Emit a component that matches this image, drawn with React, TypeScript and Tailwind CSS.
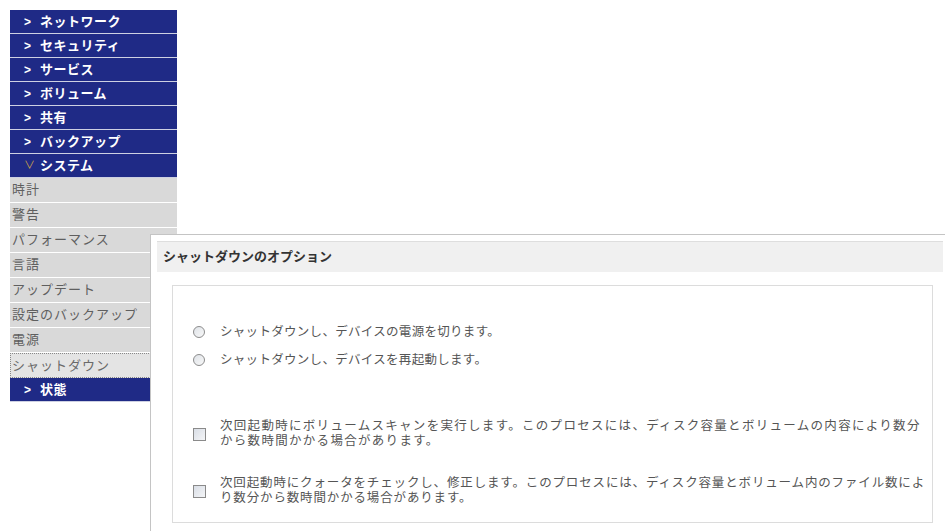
const menuTop = ["ネットワーク", "セキュリティ", "サービス", "ボリューム", "共有", "バックアップ"];
const systemItems = ["時計", "警告", "パフォーマンス", "言語", "アップデート", "設定のバックアップ", "電源"];

const jp = { fontFamily: '"Liberation Sans", "Noto Sans CJK JP", sans-serif' };

function BlueRow({ label, open }: { label: string; open?: boolean }) {
  return (
    <div className="h-[24px] bg-[#1f2a86] border-b border-[#cdd0e2] flex items-center pl-[14px] text-white text-[13px] font-bold tracking-[0.5px]">
      {open ? (
        <span className="w-[16px] text-[#c9a24a] text-[11px] font-normal">∨</span>
      ) : (
        <span className="w-[16px] text-[12px]">&gt;</span>
      )}
      <span>{label}</span>
    </div>
  );
}

function Radio() {
  return (
    <span className="w-[12px] h-[12px] rounded-full border border-[#8c8c8c] bg-gradient-to-br from-[#dfe3e8] to-[#f8f8f8] shrink-0" />
  );
}

function Checkbox() {
  return (
    <span className="w-[13px] h-[13px] border border-[#8a8a8a] bg-gradient-to-br from-[#d9dee6] to-[#f4f5f7] shrink-0" />
  );
}

export default function App() {
  return (
    <div className="relative w-[945px] h-[531px] bg-white overflow-hidden" style={jp}>
      <div className="pt-[10px] pl-[10px] w-[177px]">
        {menuTop.map((m) => (
          <BlueRow key={m} label={m} />
        ))}
        <BlueRow label="システム" open />
        {systemItems.map((s) => (
          <div
            key={s}
            className="h-[25px] bg-[#d9d9d9] border-b border-white flex items-center pl-[2px] text-[13px] text-[#5f5f5f] tracking-[1px]"
          >
            {s}
          </div>
        ))}
        <div className="h-[25px] bg-[#e4e4e4] border border-dotted border-[#888] flex items-center pl-[1px] text-[13px] text-[#6a6a6a] tracking-[1px]">
          シャットダウン
        </div>
        <BlueRow label="状態" />
      </div>

      <div className="absolute left-[150px] top-[234px] w-[800px] h-[320px] bg-white border-l border-t border-[#c4c4c4] pt-[6px]">
        <div className="ml-[6px] w-[786px] h-[31px] bg-[#f0f0f0] border-t border-[#dedede] flex items-center pl-[6px] text-[13px] font-bold text-[#333]">
          シャットダウンのオプション
        </div>

        <div className="ml-[21px] mt-[13px] w-[761px] h-[238px] border border-[#dcdcdc] pt-[32px] pl-[20px] text-[12.5px] text-[#555] tracking-[0.3px]">
          <div className="h-[28px] flex items-center gap-[15px]">
            <Radio />
            <span>シャットダウンし、デバイスの電源を切ります。</span>
          </div>
          <div className="h-[28px] flex items-center gap-[15px]">
            <Radio />
            <span>シャットダウンし、デバイスを再起動します。</span>
          </div>

          <div className="mt-[45px] flex items-center gap-[14px]">
            <Checkbox />
            <div className="leading-[15px] whitespace-nowrap tracking-[1.3px]">
              <div>次回起動時にボリュームスキャンを実行します。このプロセスには、ディスク容量とボリュームの内容により数分</div>
              <div>から数時間かかる場合があります。</div>
            </div>
          </div>
          <div className="mt-[27px] flex items-center gap-[14px]">
            <Checkbox />
            <div className="leading-[15px] whitespace-nowrap tracking-[0.85px]">
              <div>次回起動時にクォータをチェックし、修正します。このプロセスには、ディスク容量とボリューム内のファイル数によ</div>
              <div>り数分から数時間かかる場合があります。</div>
            </div>
          </div>
        </div>
      </div>
    </div>
  );
}
